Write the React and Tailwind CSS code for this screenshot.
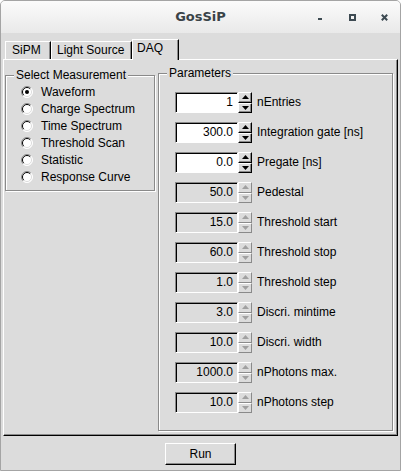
import React from "react";

const params = [
  { v: "1", l: "nEntries", on: true },
  { v: "300.0", l: "Integration gate [ns]", on: true },
  { v: "0.0", l: "Pregate [ns]", on: true },
  { v: "50.0", l: "Pedestal" },
  { v: "15.0", l: "Threshold start" },
  { v: "60.0", l: "Threshold stop" },
  { v: "1.0", l: "Threshold step" },
  { v: "3.0", l: "Discri. mintime" },
  { v: "10.0", l: "Discri. width" },
  { v: "1000.0", l: "nPhotons max." },
  { v: "10.0", l: "nPhotons step" },
];

const radios = [
  "Waveform",
  "Charge Spectrum",
  "Time Spectrum",
  "Threshold Scan",
  "Statistic",
  "Response Curve",
];

function Radio({ checked }) {
  return (
    <svg width="12" height="12" viewBox="0 0 12 12" className="shrink-0">
      <circle cx="6" cy="6" r="5.5" fill="white" />
      <path d="M2.1 9.9 A5.5 5.5 0 0 1 9.9 2.1" stroke="#8a8a8a" fill="none" />
      <path d="M9.9 2.1 A5.5 5.5 0 0 1 2.1 9.9" stroke="#ffffff" fill="none" />
      <path d="M2.8 9.2 A4.5 4.5 0 0 1 9.2 2.8" stroke="#000000" fill="none" />
      <path d="M9.2 2.8 A4.5 4.5 0 0 1 2.8 9.2" stroke="#dcdcdc" fill="none" />
      {checked && <circle cx="6" cy="6" r="2" fill="black" />}
    </svg>
  );
}

function Arrow({ up, on }) {
  const fill = on ? "#000000" : "#a0a0a0";
  return (
    <svg width="7" height="4" viewBox="0 0 7 4">
      {up ? (
        <polygon points="0,4 3.5,0 7,4" fill={fill} />
      ) : (
        <polygon points="0,0 7,0 3.5,4" fill={fill} />
      )}
    </svg>
  );
}

function SpinRow({ v, l, on }) {
  return (
    <div className="flex items-center h-[30px] pl-[16px]">
      <div
        className={
          on
            ? "w-[63px] h-[21px] border border-t-[#8a8a8a] border-l-[#8a8a8a] border-r-white border-b-white shadow-[inset_1px_1px_0_#000] bg-white flex items-center justify-end pr-[4px] leading-[14px]"
            : "w-[63px] h-[21px] border border-t-[#8a8a8a] border-l-[#8a8a8a] border-r-white border-b-white shadow-[inset_1px_1px_0_#000] bg-[#dcdcdc] flex items-center justify-end pr-[4px] leading-[14px]"
        }
      >
        {v}
      </div>
      <div className="flex flex-col w-[14px] h-[21px]">
        <div
          className={
            on
              ? "h-[11px] flex items-center justify-center border border-t-white border-l-white border-r-black border-b-black shadow-[inset_-1px_-1px_0_#8a8a8a]"
              : "h-[11px] flex items-center justify-center border border-t-white border-l-white border-r-[#8a8a8a] border-b-[#8a8a8a]"
          }
        >
          <Arrow up on={on} />
        </div>
        <div
          className={
            on
              ? "h-[10px] flex items-center justify-center border border-t-white border-l-white border-r-black border-b-black shadow-[inset_-1px_-1px_0_#8a8a8a]"
              : "h-[10px] flex items-center justify-center border border-t-white border-l-white border-r-[#8a8a8a] border-b-[#8a8a8a]"
          }
        >
          <Arrow on={on} />
        </div>
      </div>
      <div className="ml-[5px] leading-[14px] whitespace-nowrap">{l}</div>
    </div>
  );
}

export default function App() {
  return (
    <div className="w-[401px] h-[471px] flex flex-col bg-[#dcdcdc] border border-[#a4a4a4] rounded-t-[5px] overflow-hidden font-['Liberation_Sans',Arial,sans-serif] text-[12px] text-black">
      {/* Title bar */}
      <div className="h-[32px] shrink-0 grid grid-cols-[1fr_auto_1fr] items-center bg-linear-to-b from-[#fbfbfb] to-[#e9e9e9]">
        <div />
        <div className="font-['DejaVu_Sans',sans-serif] font-bold text-[13px] text-[#3a4348] leading-[16px]">
          GosSiP
        </div>
        <div className="flex justify-end h-full">
          <div className="w-[32px] flex items-center justify-center pt-[4px]">
            <div className="w-[4px] h-[2px] bg-[#3d4a52]" />
          </div>
          <div className="w-[32px] flex items-center justify-center">
            <div className="w-[7px] h-[7px] border-2 border-[#3d4a52]" />
          </div>
          <div className="w-[32px] flex items-center justify-center">
            <svg width="7" height="7" viewBox="0 0 7 7">
              <path d="M0.8 0.8 L6.2 6.2 M6.2 0.8 L0.8 6.2" stroke="#3d4a52" strokeWidth="2" />
            </svg>
          </div>
        </div>
      </div>

      {/* Body */}
      <div className="flex flex-col px-[2px]">
        {/* Tabs */}
        <div className="flex items-end h-[20px] mt-[6px] pl-[2px]">
          <div className="w-[46px] h-[18px] border-t border-l border-r border-t-white border-l-white border-r-black shadow-[inset_-1px_0_0_#8a8a8a] pl-[6px] leading-[16px]">
            SiPM
          </div>
          <div className="w-[81px] h-[18px] border-t border-l border-r border-t-white border-l-white border-r-black shadow-[inset_-1px_0_0_#8a8a8a] pl-[5px] leading-[16px] whitespace-nowrap">
            Light Source
          </div>
          <div className="relative z-10 w-[47px] h-[21px] -mb-[1px] bg-[#dcdcdc] border-t border-l border-r border-t-white border-l-white border-r-black shadow-[inset_-1px_0_0_#8a8a8a] pl-[4px] leading-[16px]">
            DAQ
          </div>
        </div>

        {/* Tab panel */}
        <div className="h-[377px] flex items-start pl-[1px] border border-t-white border-l-white border-r-black border-b-black shadow-[inset_-1px_-1px_0_#8a8a8a]">
          {/* Select Measurement */}
          <div className="mt-[15px] w-[150px] border border-[#8a8a8a] shadow-[1px_1px_0_white,inset_1px_1px_0_white] pb-[5px]">
            <div className="-mt-[8px] ml-[8px] px-[2px] w-fit bg-[#dcdcdc] leading-[15px] whitespace-nowrap">
              Select Measurement
            </div>
            <div className="flex flex-col">
              {radios.map((r, i) => (
                <div key={r} className="flex items-center h-[17px] pl-[15px] gap-[8px]">
                  <Radio checked={i === 0} />
                  <span className="leading-[14px] whitespace-nowrap">{r}</span>
                </div>
              ))}
            </div>
          </div>

          {/* Parameters */}
          <div className="ml-[3px] mt-[13px] w-[235px] border border-[#8a8a8a] shadow-[1px_1px_0_white,inset_1px_1px_0_white] pb-[13px]">
            <div className="-mt-[8px] ml-[8px] px-[2px] w-fit bg-[#dcdcdc] leading-[15px] whitespace-nowrap">
              Parameters
            </div>
            <div className="flex flex-col pt-[6px]">
              {params.map((p) => (
                <SpinRow key={p.l} {...p} />
              ))}
            </div>
          </div>
        </div>

        {/* Run button */}
        <div className="flex justify-center mt-[7px]">
          <div className="w-[71px] h-[22px] flex items-center justify-center border border-t-white border-l-white border-r-black border-b-black shadow-[inset_-1px_-1px_0_#8a8a8a] leading-[14px]">
            Run
          </div>
        </div>
      </div>
    </div>
  );
}
